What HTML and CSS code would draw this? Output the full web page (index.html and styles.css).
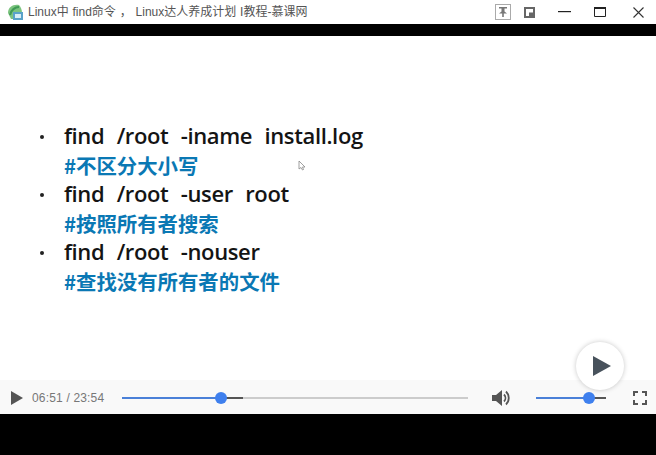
FILE: index.html
```html
<!DOCTYPE html>
<html lang="zh">
<head>
<meta charset="utf-8">
<title>Linux中 find命令</title>
<link rel="stylesheet" href="styles.css">
</head>
<body>
<div class="window">
  <header class="titlebar">
    <svg class="app-icon" width="16" height="18" viewBox="0 0 16 18">
      <path d="M1 10C1 4 6 1 12 2c2 2 3 5 3 8l-3 6H4z" fill="#7cc47f"/>
      <path d="M3 12C4 7 8 4 12 4" stroke="#3f9a55" stroke-width="2" fill="none"/>
      <rect x="6" y="9" width="10" height="8" fill="#5aa2c8"/>
      <rect x="8" y="11" width="6" height="4" fill="#d8eef5"/>
    </svg>
    <span class="title">Linux中 find命令 ， Linux达人养成计划 I教程-慕课网</span>
    <div class="win-buttons">
      <span class="pin"><svg width="12" height="12" viewBox="0 0 12 12"><path d="M2 1h8v1.500H7.500v3L10 7.500H6.800V11H5.200V7.500H2l2.500-2v-3H2z" fill="#777"/></svg></span>
      <svg class="mini" width="11" height="11" viewBox="0 0 11 11"><path d="M0 0h11v11H0zM2 2v7h3V5.500h4V2z" fill="#666" fill-rule="evenodd"/></svg>
      <svg class="minimize" width="13" height="2" viewBox="0 0 13 2"><rect width="13" height="1.200" fill="#222"/></svg>
      <svg class="maximize" width="12" height="10" viewBox="0 0 12 10"><path d="M.5.500h11v9H.5z" fill="none" stroke="#222"/><rect width="12" height="2" fill="#222"/></svg>
      <svg class="close" width="11" height="11" viewBox="0 0 11 11"><path d="M.5.500l10 10M10.500.500l-10 10" stroke="#333" stroke-width="1.100"/></svg>
    </div>
  </header>
  <div class="letterbox-top"></div>
  <main class="slide">
    <ul class="commands">
      <li class="cmd">find /root -iname install.log</li>
      <li class="note">#不区分大小写</li>
      <li class="cmd">find /root -user root</li>
      <li class="note">#按照所有者搜索</li>
      <li class="cmd">find /root -nouser</li>
      <li class="note">#查找没有所有者的文件</li>
    </ul>
    <svg class="cursor" width="8" height="11" viewBox="0 0 8 11"><path d="M1 1v8l2-1.500L4.500 10l1-.5L4.500 7H7z" fill="#fff" stroke="#888" stroke-width=".8"/></svg>
    <button class="big-play" aria-label="播放"><svg width="18" height="20" viewBox="0 0 18 20"><path d="M0 0l18 10L0 20z" fill="#48525c"/></svg></button>
  </main>
  <footer class="controls">
    <svg class="play" width="12" height="14" viewBox="0 0 12 14"><path d="M0 0l12 7-12 7z" fill="#555"/></svg>
    <span class="time">06:51 / 23:54</span>
    <div class="track progress">
      <div class="buffered"></div>
      <div class="fill"></div>
      <div class="thumb"></div>
    </div>
    <svg class="volume" width="20" height="18" viewBox="0 0 20 18"><path d="M0 6h4l6-5v16l-6-5H0z" fill="#555"/><path d="M12 5.500a5 5 0 0 1 0 7" stroke="#555" stroke-width="1.800" fill="none"/><path d="M14 2.500a9 9 0 0 1 0 13" stroke="#555" stroke-width="1.800" fill="none"/></svg>
    <div class="track vol">
      <div class="vol-fill"></div>
      <div class="thumb"></div>
    </div>
    <svg class="fullscreen" width="14" height="14" viewBox="0 0 14 14"><path d="M1 5V1h4M9 1h4v4M13 9v4H9M5 13H1V9" fill="none" stroke="#555" stroke-width="2"/></svg>
  </footer>
  <div class="letterbox-bottom"></div>
</div>
</body>
</html>
```
FILE: styles.css
```css
* { box-sizing: border-box; }
html, body { margin: 0; padding: 0; background: #000; overflow: hidden; }
.window { width: 656px; height: 455px; display: flex; flex-direction: column; }
.titlebar { height: 24px; background: #fff; display: flex; align-items: center; padding-left: 7px; flex: none; }
.app-icon { flex: none; margin-right: 5px; }
.title { font: 12px/24px "Liberation Sans", "Noto Sans CJK SC", sans-serif; color: #555; white-space: nowrap; word-spacing: .5px; }
.win-buttons { margin-left: auto; display: flex; align-items: center; }
.pin { width: 16px; height: 16px; border: 1px solid #aaa; display: flex; align-items: center; justify-content: center; margin-right: 13px; }
.mini { margin-right: 23px; }
.minimize { margin-right: 23px; }
.maximize { margin-right: 27px; }
.close { margin-right: 12px; }
.letterbox-top { height: 12px; background: #000; flex: none; }
.slide { height: 344px; flex: none; background: #fff; position: relative; padding-top: 85px; }
.commands { list-style: none; margin: 0; padding: 0 0 0 64px; }
.cmd, .note { height: 29px; line-height: 29px; white-space: nowrap; position: relative; }
.cmd { font: 600 22px/29px "Open Sans", sans-serif; color: #141414; word-spacing: 7px; letter-spacing: -.37px; }
.cmd::before { content: ""; position: absolute; left: -24px; top: 14px; width: 4px; height: 4px; border-radius: 50%; background: #222; }
.note { font: 700 20.400px/29px "Noto Sans CJK SC", sans-serif; color: #0a78b4; top: 1px; }
.cursor { position: absolute; left: 298px; top: 124px; }
.big-play { position: absolute; left: 576px; top: 306px; width: 48px; height: 48px; border-radius: 50%; border: 0; padding: 0 0 0 3px; background: #fff; box-shadow: 0 0 5px rgba(0,0,0,.22); display: flex; align-items: center; justify-content: center; z-index: 2; }
.controls { height: 34px; flex: none; background: #f9f9f9; display: flex; align-items: center; padding-left: 11px; padding-top: 1px; }
.play { flex: none; margin-right: 9px; }
.time { font: 12px/34px "Liberation Sans", sans-serif; color: #777; letter-spacing: .17px; width: 90px; flex: none; white-space: nowrap; }
.track { height: 2px; position: relative; flex: none; }
.progress { width: 346px; background: #ccc; margin-right: 24px; }
.buffered { position: absolute; left: 0; top: 0; height: 2px; width: 121px; background: #555; }
.fill { position: absolute; left: 0; top: 0; height: 2px; width: 99px; background: #4a80d8; }
.thumb { position: absolute; top: -5px; width: 12px; height: 12px; border-radius: 50%; background: #3f80ee; }
.progress .thumb { left: 93px; }
.volume { flex: none; margin-right: 24px; }
.vol { width: 70px; background: #555; margin-right: 27px; }
.vol-fill { position: absolute; left: 0; top: 0; height: 2px; width: 53px; background: #4a80d8; }
.vol .thumb { left: 47px; }
.fullscreen { flex: none; }
.letterbox-bottom { flex: 1; background: #000; }
```
